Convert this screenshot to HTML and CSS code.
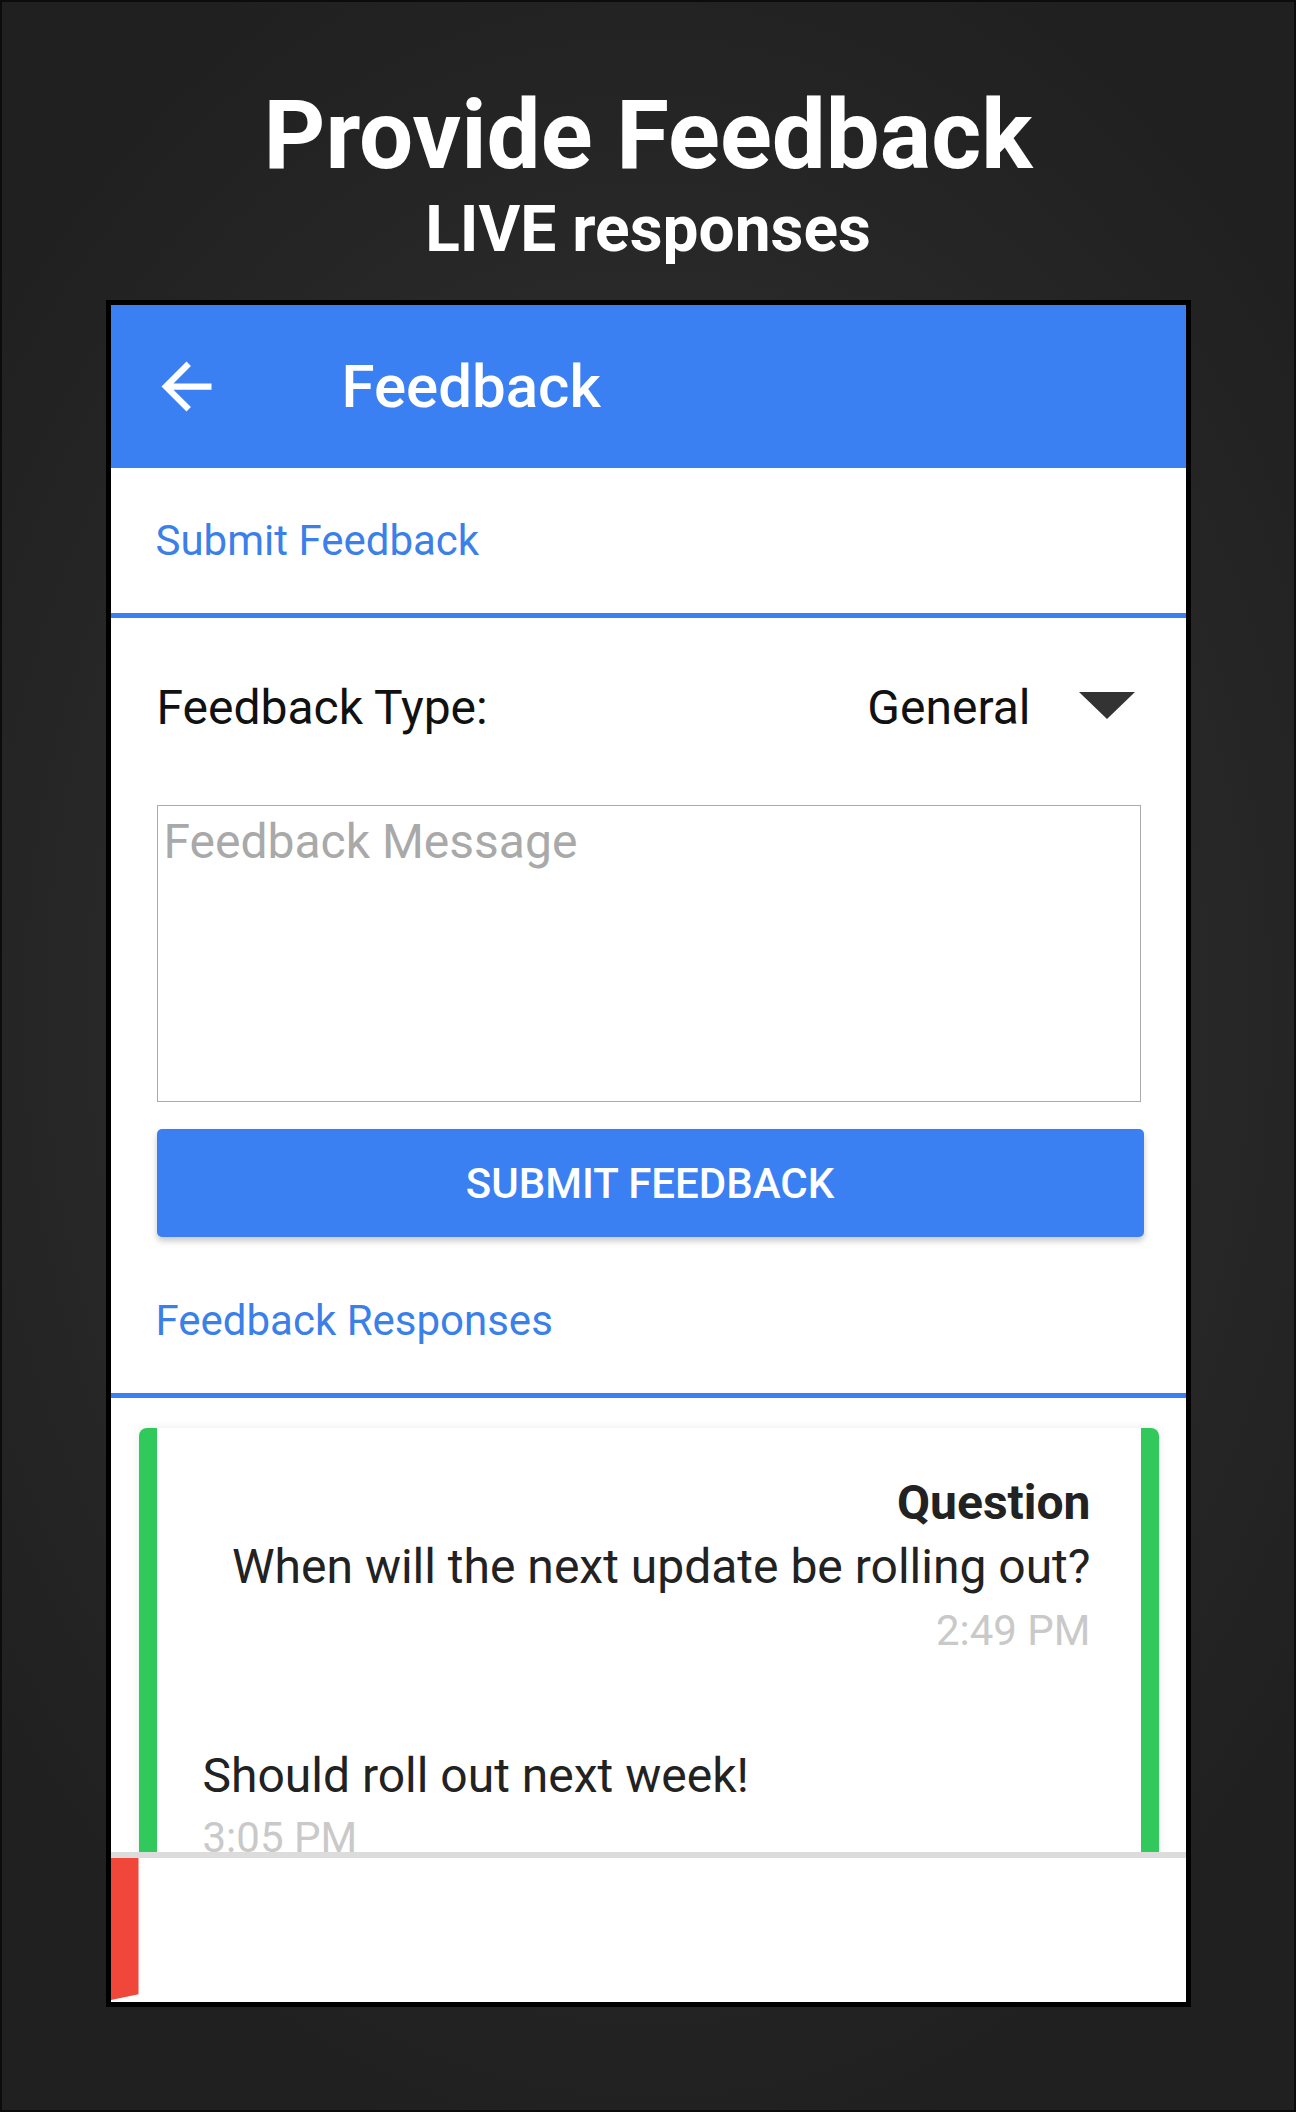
FILE: index.html
```html
<!DOCTYPE html>
<html lang="en">
<head>
<meta charset="utf-8">
<title>Provide Feedback</title>
<link rel="stylesheet" href="styles.css">
</head>
<body>
<div class="page">
  <header class="hero">
    <h1 class="hero-title">Provide Feedback</h1>
    <p class="hero-sub">LIVE responses</p>
  </header>

  <div class="phone">
    <div class="screen">
      <div class="appbar">
        <button class="back" aria-label="Back">
          <svg viewBox="0 0 24 24" width="75" height="75"><path fill="#fff" d="M20 11H7.83l5.59-5.59L12 4l-8 8 8 8 1.41-1.41L7.83 13H20v-2z"/></svg>
        </button>
        <div class="appbar-title">Feedback</div>
      </div>

      <div class="section-tab">Submit Feedback</div>

      <div class="form">
        <div class="type-row">
          <span class="type-label">Feedback Type:</span>
          <span class="type-select">
            <span class="type-value">General</span>
            <svg class="caret" viewBox="0 0 56 27" width="56" height="27"><polygon points="0,0 56,0 28,27" fill="#333"/></svg>
          </span>
        </div>
        <textarea class="message" placeholder="Feedback Message"></textarea>
        <button class="submit">SUBMIT FEEDBACK</button>
      </div>

      <div class="section-tab">Feedback Responses</div>

      <div class="list">
        <div class="card">
          <div class="q-label">Question</div>
          <div class="q-text">When will the next update be rolling out?</div>
          <div class="q-time">2:49 PM</div>
          <div class="r-text">Should roll out next week!</div>
          <div class="r-time">3:05 PM</div>
        </div>
      </div>

      <div class="next">
        <div class="next-bar"></div>
      </div>
    </div>
  </div>
</div>
</body>
</html>
```

FILE: styles.css
```css
* { box-sizing: border-box; }

html, body {
  margin: 0;
  padding: 0;
}

body {
  width: 1296px;
  height: 2112px;
  overflow: hidden;
  font-family: Roboto, "Liberation Sans", Arial, sans-serif;
}

.page {
  width: 1296px;
  height: 2112px;
  border: 2px solid #0c0c0c;
  background: radial-gradient(ellipse 65% 55% at 50% 48%, #363636 0%, #2d2d2d 45%, #232323 85%, #202020 100%);
}

.hero {
  padding-top: 85px;
  text-align: center;
  color: #fff;
}

.hero-title {
  margin: 0;
  font-size: 96px;
  line-height: 96px;
  font-weight: 700;
  letter-spacing: 0;
}

.hero-sub {
  margin: 15px 0 0;
  font-size: 64px;
  line-height: 64px;
  font-weight: 700;
}

.phone {
  width: 1085px;
  height: 1707px;
  margin: 38px auto 0;
  border: 5px solid #000;
  background: #fff;
}

.screen {
  height: 100%;
  display: flex;
  flex-direction: column;
  overflow: hidden;
}

.appbar {
  height: 163px;
  flex: none;
  background: #3b80f2;
  display: flex;
  align-items: center;
  color: #fff;
}

.back {
  margin-left: 38px;
  padding: 0;
  border: 0;
  background: none;
  width: 75px;
  height: 75px;
  display: flex;
}

.appbar-title {
  margin-left: 118px;
  font-size: 60px;
  font-weight: 500;
}

.section-tab {
  height: 150px;
  flex: none;
  display: flex;
  align-items: center;
  padding-left: 45px;
  border-bottom: 5px solid #3b80f2;
  color: #3b7fe9;
  font-size: 42px;
}

.form {
  flex: none;
  height: 630px;
  padding: 0 45px 0 46px;
  display: flex;
  flex-direction: column;
}

.type-row {
  height: 178px;
  display: flex;
  align-items: center;
  justify-content: space-between;
  color: #111;
  font-size: 48px;
}

.type-select {
  display: flex;
  align-items: center;
  gap: 48px;
  margin-right: 6px;
}

.caret {
  display: block;
  margin-top: -4px;
}

.message {
  margin-top: 9px;
  height: 297px;
  width: 984px;
  resize: none;
  border: 1px solid #aaa;
  border-radius: 0;
  padding: 8px 6px;
  font-family: Roboto, "Liberation Sans", Arial, sans-serif;
  font-size: 48px;
  line-height: 56px;
  color: #222;
  outline: none;
}

.message::placeholder {
  color: #a9a9a9;
}

.submit {
  margin-top: 27px;
  height: 108px;
  width: 987px;
  border: 0;
  border-radius: 5px;
  background: #3b80f2;
  color: #fff;
  font-family: Roboto, "Liberation Sans", Arial, sans-serif;
  font-size: 42px;
  font-weight: 500;
  box-shadow: 0 4px 6px rgba(0, 0, 0, 0.22);
}

.list {
  flex: none;
  height: 454px;
  overflow: hidden;
  padding: 30px 27px 0 28px;
}

.card {
  background: #fff;
  border-left: 18px solid #31c95c;
  border-right: 18px solid #31c95c;
  border-radius: 8px 8px 0 0;
  box-shadow: 0 0 10px rgba(0, 0, 0, 0.08);
  padding: 45px 50px 0 46px;
  color: #222;
}

.q-label {
  text-align: right;
  font-size: 48px;
  line-height: 60px;
  font-weight: 700;
}

.q-text {
  margin-top: 2px;
  text-align: right;
  font-size: 48px;
  line-height: 64px;
}

.q-time {
  margin-top: 2px;
  text-align: right;
  font-size: 42px;
  line-height: 60px;
  color: #c9c9c9;
}

.r-text {
  margin-top: 83px;
  font-size: 48px;
  line-height: 64px;
}

.r-time {
  font-size: 42px;
  line-height: 60px;
  color: #c9c9c9;
}

.next {
  flex: 1;
  border-top: 6px solid #dcdcdc;
  display: flex;
}

.next-bar {
  width: 28px;
  height: 142px;
  background: #f0473a;
  clip-path: polygon(0 0, 100% 0, 100% 96%, 0 100%);
}
```
